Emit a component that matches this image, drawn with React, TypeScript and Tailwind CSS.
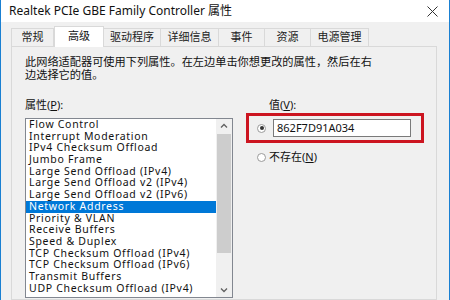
const items = [
  "Flow Control",
  "Interrupt Moderation",
  "IPv4 Checksum Offload",
  "Jumbo Frame",
  "Large Send Offload (IPv4)",
  "Large Send Offload v2 (IPv4)",
  "Large Send Offload v2 (IPv6)",
  "Network Address",
  "Priority & VLAN",
  "Receive Buffers",
  "Speed & Duplex",
  "TCP Checksum Offload (IPv4)",
  "TCP Checksum Offload (IPv6)",
  "Transmit Buffers",
  "UDP Checksum Offload (IPv4)",
];

const tabs = [
  { label: "常规", w: "w-[43px]" },
  { label: "高级", w: "w-[50px]", active: true },
  { label: "驱动程序", w: "w-[57px]" },
  { label: "详细信息", w: "w-[58px]" },
  { label: "事件", w: "w-[46px]" },
  { label: "资源", w: "w-[46px]" },
  { label: "电源管理", w: "w-[58px]" },
];

function Radio({ checked }: { checked?: boolean }) {
  return (
    <span className="flex h-[9px] w-[9px] items-center justify-center rounded-full border border-[#9a9a9a] bg-white">
      {checked && <span className="h-[4px] w-[4px] rounded-full bg-[#333]" />}
    </span>
  );
}

export default function App() {
  return (
    <div
      className="flex h-[300px] w-[450px] flex-col overflow-hidden border-x border-[#1a80d2] bg-[#f0f0f0] text-[#111]"
      style={{ fontFamily: '"Noto Sans", "Noto Sans CJK SC", sans-serif' }}
    >
      {/* title bar */}
      <div className="flex h-[22px] shrink-0 items-center justify-between bg-white pl-[8px] pr-[10px] text-[12px]">
        <span>Realtek PCIe GBE Family Controller 属性</span>
        <svg width="11" height="11" viewBox="0 0 11 11" className="mr-[1px]">
          <path d="M0.5 0.5L10.5 10.5M10.5 0.5L0.5 10.5" stroke="#333" strokeWidth="1" />
        </svg>
      </div>

      {/* tabs */}
      <div className="mt-[4px] flex h-[20px] shrink-0 items-end pl-[10px] text-[11px]">
        {tabs.map((t) =>
          t.active ? (
            <div
              key={t.label}
              className={`relative z-10 -mb-px flex h-[21px] ${t.w} items-start justify-center border border-b-0 border-[#d9d9d9] bg-white pt-[1px]`}
            >
              {t.label}
            </div>
          ) : (
            <div
              key={t.label}
              className={`flex h-[18px] ${t.w} items-center justify-center border border-b-0 border-l-0 border-[#d9d9d9] first:border-l text-[#222]`}
            >
              {t.label}
            </div>
          )
        )}
      </div>

      {/* panel */}
      <div className="mx-[10px] mr-[12px] flex flex-1 flex-col border border-[#d9d9d9] bg-[#f0f0f0] pl-[13px] pt-[8px] text-[11px]">
        <p className="text-[11.2px] leading-[13px]">
          此网络适配器可使用下列属性。在左边单击你想更改的属性，然后在右
          <br />
          边选择它的值。
        </p>

        <div className="mt-[17px] flex">
          <div className="flex w-[208px] flex-col">
            <div className="h-[14px] leading-[14px]">
              属性(<span className="underline">P</span>):
            </div>
            <div className="mt-[6px] flex h-[180px] border border-[#828790] bg-white">
              <div className="flex flex-1 flex-col">
                {items.map((it, i) => (
                  <div
                    key={it}
                    className={`h-[11.7px] shrink-0 whitespace-nowrap pl-[3px] text-[10.5px] leading-[11.7px] tracking-[0.7px] ${
                      i === 7 ? "bg-[#0078d7] text-white" : ""
                    }`}
                  >
                    {it}
                  </div>
                ))}
              </div>
              <div className="flex w-[16px] flex-col items-center bg-[#f0f0f0]">
                <svg width="8" height="8" viewBox="0 0 8 8" className="mt-[3px]">
                  <path d="M1 5.5L4 2.5L7 5.5" stroke="#606060" strokeWidth="1.3" fill="none" />
                </svg>
                <div className="mt-[4px] h-[119px] w-[14px] bg-[#cdcdcd]" />
                <div className="flex-1" />
                <svg width="8" height="8" viewBox="0 0 8 8" className="mb-[3px]">
                  <path d="M1 2.5L4 5.5L7 2.5" stroke="#606060" strokeWidth="1.3" fill="none" />
                </svg>
              </div>
            </div>
          </div>

          <div className="ml-[13px] flex flex-col">
            <div className="ml-[23px] h-[14px] leading-[14px]">
              值(<span className="underline">V</span>):
            </div>
            <div className="mt-[1px] flex h-[30px] w-[178px] items-center border-[3px] border-[#cc1520] pl-[8px]">
              <Radio checked />
              <div className="ml-[7px] flex h-[18px] w-[138px] items-center border border-[#7a7a7a] bg-white pl-[3px] text-[11px]">
                862F7D91A034
              </div>
            </div>
            <div className="ml-[11px] mt-[6px] flex items-center">
              <Radio />
              <span className="ml-[3px]">
                不存在(<span className="underline">N</span>)
              </span>
            </div>
          </div>
        </div>
      </div>
    </div>
  );
}
